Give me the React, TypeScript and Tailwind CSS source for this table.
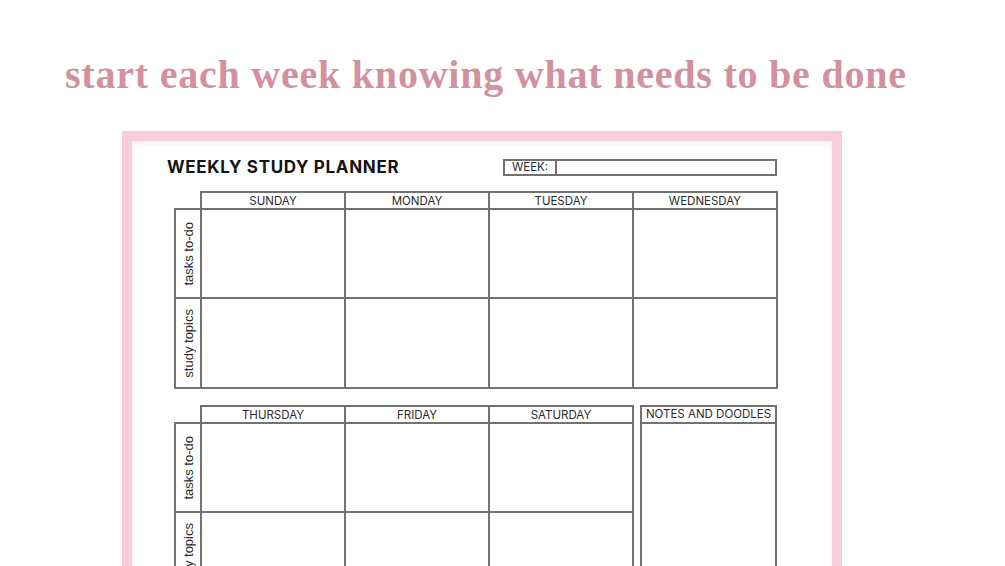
import React from 'react';

const line = 'border-[#727272]';

const DayHead: React.FC<{ label: string }> = ({ label }) => (
  <th className={`border-2 ${line} h-[17px] p-0 pt-[2px] text-[11.5px] font-normal leading-none text-[#2b2b2b]`}>
    {label}
  </th>
);

const SideLabel: React.FC<{ label: string }> = ({ label }) => (
  <td className={`border-2 ${line} p-0 w-[26px]`}>
    <div className="flex h-full items-center justify-center">
      <span className="[writing-mode:vertical-rl] rotate-180 text-[13px] leading-none text-[#2b2b2b] font-['Liberation_Sans',Arial,sans-serif]">
        {label}
      </span>
    </div>
  </td>
);

const Cell: React.FC = () => <td className={`border-2 ${line} p-0 w-[144px]`} />;

const WeekTable: React.FC<{ days: string[]; rowHeights: number[] }> = ({ days, rowHeights }) => (
  <table className="border-collapse table-fixed">
    <thead>
      <tr>
        <th className="w-[26px] p-0 border-0" />
        {days.map((d) => (
          <DayHead key={d} label={d} />
        ))}
      </tr>
    </thead>
    <tbody>
      <tr style={{ height: rowHeights[0] }}>
        <SideLabel label="tasks to-do" />
        {days.map((d) => (
          <Cell key={d} />
        ))}
      </tr>
      <tr style={{ height: rowHeights[1] }}>
        <SideLabel label="study topics" />
        {days.map((d) => (
          <Cell key={d} />
        ))}
      </tr>
    </tbody>
  </table>
);

const App: React.FC = () => {
  return (
    <div className="w-[1005px] h-[566px] overflow-hidden bg-white">
      <h1 className="pt-[55px] pl-[65px] text-[40px] leading-none font-bold tracking-[0.78px] text-[#d3909e] font-['Liberation_Serif','Times_New_Roman',serif] whitespace-nowrap">
        start each week knowing what needs to be done
      </h1>

      <div className="ml-[122px] mt-[36px] w-[720px] h-[500px] border-[10px] border-b-0 border-[#f7cdd9] bg-white shadow-[inset_0_2px_4px_rgba(0,0,0,0.08)]">
        <div className="pl-[35px] pt-[17px] font-['Inter',sans-serif]">
          <div className="flex items-center h-[18px]">
            <h2 className="text-[17px] font-bold tracking-[0.04em] text-[#141414] leading-none">WEEKLY STUDY PLANNER</h2>
            <div className={`ml-auto mr-[55px] mt-[1px] flex w-[274px] h-[17px] border-2 ${line}`}>
              <div className={`w-[52px] border-r-2 ${line} flex items-center justify-center pt-[1px] text-[11.5px] text-[#2b2b2b] leading-none`}>
                WEEK:
              </div>
            </div>
          </div>

          <div className="ml-[7px] mt-[15px]">
            <WeekTable days={['SUNDAY', 'MONDAY', 'TUESDAY', 'WEDNESDAY']} rowHeights={[89, 90]} />
          </div>

          <div className="ml-[7px] mt-[16px] flex items-start">
            <WeekTable days={['THURSDAY', 'FRIDAY', 'SATURDAY']} rowHeights={[89, 90]} />
            <div className={`ml-[6px] w-[137px] border-2 ${line}`}>
              <div className={`h-[17px] border-b-2 ${line} flex items-center justify-center pt-[1px] text-[11.5px] text-[#2b2b2b] leading-none`}>
                NOTES AND DOODLES
              </div>
              <div className="h-[200px]" />
            </div>
          </div>
        </div>
      </div>
    </div>
  );
};

export default App;
